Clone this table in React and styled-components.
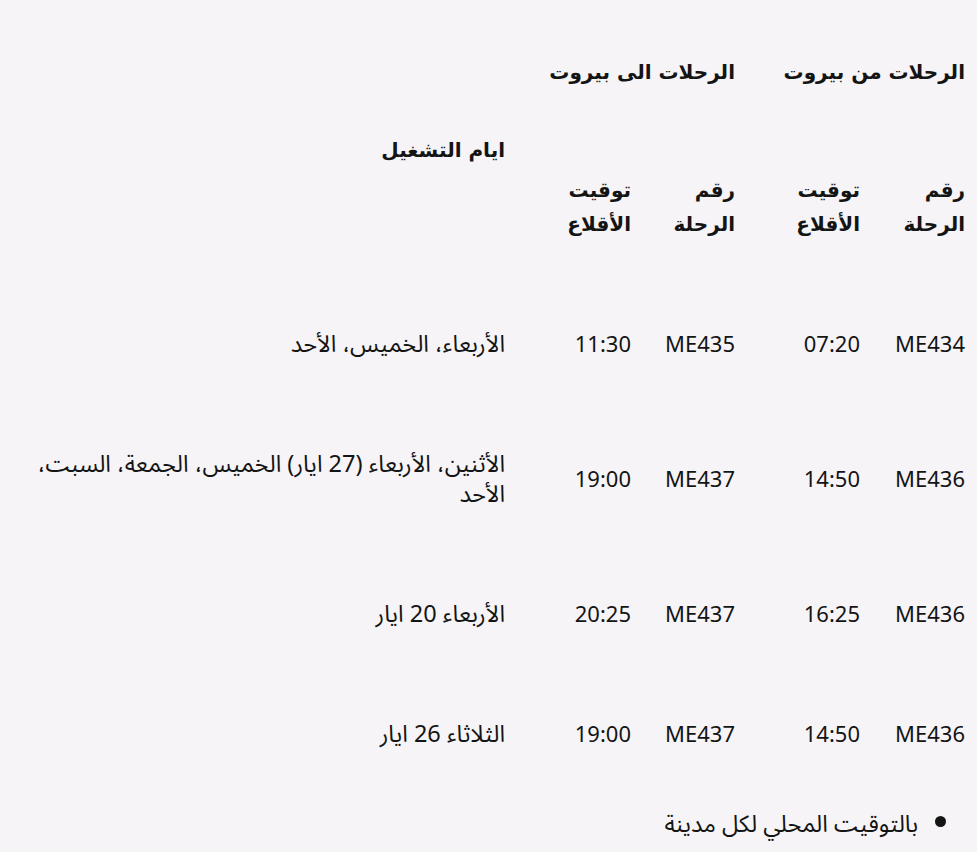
import React from "react";
import styled, { createGlobalStyle } from "styled-components";

const Global = createGlobalStyle`
  html, body {
    margin: 0;
    padding: 0;
    background: #f6f4f7;
  }
  body {
    font-family: "Noto Sans Arabic", "Noto Sans", "DejaVu Sans", sans-serif;
    color: #141414;
  }
`;

const flights = [
  { fromNo: "ME434", fromTime: "07:20", toNo: "ME435", toTime: "11:30", days: "الأربعاء، الخميس، الأحد" },
  { fromNo: "ME436", fromTime: "14:50", toNo: "ME437", toTime: "19:00", days: "الأثنين، الأربعاء (27 ايار) الخميس، الجمعة، السبت، الأحد" },
  { fromNo: "ME436", fromTime: "16:25", toNo: "ME437", toTime: "20:25", days: "الأربعاء 20 ايار" },
  { fromNo: "ME436", fromTime: "14:50", toNo: "ME437", toTime: "19:00", days: "الثلاثاء 26 ايار" },
];

const App = () => {
  return (
    <S.Page dir="rtl">
      <Global />
      <S.Head>
        <S.Group $col="1 / 3">الرحلات من بيروت</S.Group>
        <S.Group $col="3 / 5">الرحلات الى بيروت</S.Group>
        <S.Days>ايام التشغيل</S.Days>
        <S.Label>رقم<br />الرحلة</S.Label>
        <S.Label>توقيت<br />الأقلاع</S.Label>
        <S.Label>رقم<br />الرحلة</S.Label>
        <S.Label>توقيت<br />الأقلاع</S.Label>
      </S.Head>
      <S.Body>
        {flights.map((f, i) => (
          <S.Row key={i}>
            <S.Cell>{f.fromNo}</S.Cell>
            <S.Cell>{f.fromTime}</S.Cell>
            <S.Cell>{f.toNo}</S.Cell>
            <S.Cell>{f.toTime}</S.Cell>
            <S.Cell $arabic>{f.days}</S.Cell>
          </S.Row>
        ))}
      </S.Body>
      <S.Notes>
        <li>بالتوقيت المحلي لكل مدينة</li>
      </S.Notes>
    </S.Page>
  );
};

const columns = "105px 125px 104px 126px 1fr";

const S = {
  Page: styled.div`
    padding: 40px 12px 0 25px;
    min-height: 852px;
    box-sizing: border-box;
    font-size: 22px;
    line-height: 30px;
  `,
  Head: styled.div`
    display: grid;
    grid-template-columns: ${columns};
    grid-template-rows: 64px 156px;
    font-family: "DejaVu Sans", sans-serif;
    font-weight: bold;
    font-size: 20px;
    line-height: 34px;
  `,
  Group: styled.div`
    grid-column: ${({ $col }) => $col};
    grid-row: 1;
    align-self: center;
  `,
  Days: styled.div`
    grid-column: 5;
    grid-row: 1 / 3;
    align-self: center;
  `,
  Label: styled.div`
    grid-row: 2;
    align-self: end;
    padding-bottom: 19px;
  `,
  Body: styled.div`
    margin-top: 25px;
  `,
  Row: styled.div`
    display: grid;
    grid-template-columns: ${columns};
    align-items: center;
    padding: 45px 0;
  `,
  Cell: styled.div`
    padding-left: ${({ $arabic }) => ($arabic ? "0" : "20px")};
    font-size: ${({ $arabic }) => ($arabic ? "23.5px" : "inherit")};
  `,
  Notes: styled.ul`
    margin: 15px 0 0;
    padding: 0 47px 0 0;
    list-style: disc;
    font-size: 23.5px;
  `,
};

export default App;
